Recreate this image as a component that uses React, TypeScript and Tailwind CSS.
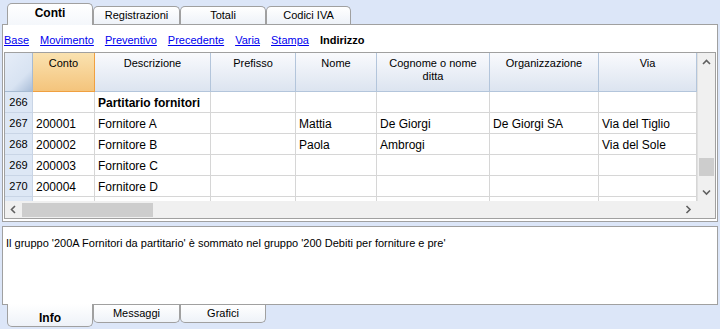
import React from "react";

type Col = { label: string[]; w: string };

const cols: Col[] = [
  { label: ["Descrizione"], w: "w-[116px]" },
  { label: ["Prefisso"], w: "w-[85px]" },
  { label: ["Nome"], w: "w-[81px]" },
  { label: ["Cognome o nome", "ditta"], w: "w-[113px]" },
  { label: ["Organizzazione"], w: "w-[109px]" },
  { label: ["Via"], w: "w-[98px]" },
];

const rows = [
  { n: "266", conto: "", cells: ["Partitario fornitori", "", "", "", "", ""], bold: true },
  { n: "267", conto: "200001", cells: ["Fornitore A", "", "Mattia", "De Giorgi", "De Giorgi SA", "Via del Tiglio"] },
  { n: "268", conto: "200002", cells: ["Fornitore B", "", "Paola", "Ambrogi", "", "Via del Sole"] },
  { n: "269", conto: "200003", cells: ["Fornitore C", "", "", "", "", ""] },
  { n: "270", conto: "200004", cells: ["Fornitore D", "", "", "", "", ""] },
  { n: "", conto: "", cells: ["", "", "", "", "", ""] },
];

const links = ["Base", "Movimento", "Preventivo", "Precedente", "Varia", "Stampa"];

function Chevron({ dir }: { dir: "up" | "down" | "left" | "right" }) {
  const pts = {
    up: "1,5 4.5,1.5 8,5",
    down: "1,1.5 4.5,5 8,1.5",
    left: "5,1 1.5,4.5 5,8",
    right: "1.5,1 5,4.5 1.5,8",
  }[dir];
  const size = dir === "up" || dir === "down" ? { w: 9, h: 7 } : { w: 7, h: 9 };
  return (
    <svg width={size.w} height={size.h} viewBox={`0 0 ${size.w} ${size.h}`}>
      <polyline points={pts} fill="none" stroke="#606060" strokeWidth="1.6" />
    </svg>
  );
}

function TopTab({ label, w, active }: { label: string; w: string; active?: boolean }) {
  if (active) {
    return (
      <div className={`${w} relative z-10 -mb-px flex h-[22px] items-center justify-center rounded-t-[5px] border border-b-0 border-[#a0a0a0] bg-[linear-gradient(#ffffff,#f4f7fb)] pb-[3px] text-[12px] font-bold text-black`}>
        {label}
      </div>
    );
  }
  return (
    <div className={`${w} flex h-[18px] items-center justify-center rounded-t-[5px] border border-b-0 border-[#a0a0a0] bg-[linear-gradient(#ffffff,#eef2f8)] text-[11px] text-black`}>
      {label}
    </div>
  );
}

function BottomTab({ label, w, active }: { label: string; w: string; active?: boolean }) {
  if (active) {
    return (
      <div className={`${w} relative z-10 -mt-px flex h-[23px] items-center justify-center rounded-b-[5px] border border-t-0 border-[#a0a0a0] bg-[linear-gradient(#ffffff,#eef2f8)] pt-[6px] text-[12px] font-bold text-black`}>
        {label}
      </div>
    );
  }
  return (
    <div className={`${w} flex h-[18px] items-center justify-center rounded-b-[5px] border border-t-0 border-[#a0a0a0] bg-[linear-gradient(#ffffff,#eef2f8)] text-[11px] text-black`}>
      {label}
    </div>
  );
}

export default function App() {
  return (
    <div className="h-[329px] w-[720px] overflow-hidden bg-[#dce6f8] font-['Liberation_Sans',Arial,sans-serif] text-black">
      <div className="flex h-[24px] items-end pl-[7px]">
        <TopTab label="Conti" w="w-[86px]" active />
        <TopTab label="Registrazioni" w="w-[87px]" />
        <TopTab label="Totali" w="w-[86px]" />
        <TopTab label="Codici IVA" w="w-[85px]" />
      </div>

      <div className="mx-[2px] h-[198px] border border-[#a0a0a0] bg-white">
        <div className="flex h-[27px] gap-[11px] pl-[1px] pt-[8px] text-[11px] leading-[14px]">
          {links.map((l) => (
            <span key={l} className="text-[#0000ee] underline">
              {l}
            </span>
          ))}
          <span className="font-bold">Indirizzo</span>
        </div>

        <div className="mx-[1px] h-[167px] border border-[#a0a0a0]">
          <div className="flex h-[148px]">
            <div className="w-[692px] overflow-hidden">
              <div className="flex h-[39px] text-[11px] leading-[13px]">
                <div className="w-[28px] shrink-0 border-b border-r border-[#a7bbd2] bg-[linear-gradient(135deg,#e6edf8_0%,#d8e3f2_65%,#a9bdd8_100%)]" />
                <div className="w-[62px] shrink-0 border-b border-r border-[#f0a040] bg-[linear-gradient(#fae2b0,#f4c47c)] pt-[4px] text-center">
                  Conto
                </div>
                {cols.map((c) => (
                  <div
                    key={c.label[0]}
                    className={`${c.w} shrink-0 border-b border-r border-[#b3c5db] bg-[linear-gradient(#f9fafd,#dce4f0)] pt-[4px] text-center`}
                  >
                    {c.label.map((t) => (
                      <div key={t}>{t}</div>
                    ))}
                  </div>
                ))}
              </div>
              {rows.map((r, i) => (
                <div key={i} className="flex h-[21px] text-[12px]">
                  <div className="flex w-[28px] shrink-0 items-center justify-center border-b border-r border-[#c9d5e6] bg-[#dde7f5] pt-px text-[11px]">
                    {r.n}
                  </div>
                  <div className="flex w-[62px] shrink-0 items-center border-b border-r border-[#d6d6d6] pl-[3px] pt-px">
                    {r.conto}
                  </div>
                  {r.cells.map((c, j) => (
                    <div
                      key={j}
                      className={`${cols[j].w} flex shrink-0 items-center border-b border-r border-[#d6d6d6] pl-[3px] pt-px ${
                        r.bold ? "font-bold" : ""
                      }`}
                    >
                      {c}
                    </div>
                  ))}
                </div>
              ))}
            </div>
            <div className="relative w-[18px] border-l border-[#e0e0e0] bg-[#f0f0f0]">
              <div className="absolute left-[4px] top-[6px]">
                <Chevron dir="up" />
              </div>
              <div className="absolute left-[1px] top-[105px] h-[18px] w-[15px] bg-[#cdcdcd]" />
              <div className="absolute left-[4px] top-[136px]">
                <Chevron dir="down" />
              </div>
            </div>
          </div>
          <div className="flex h-[17px] items-center bg-[#f0f0f0]">
            <div className="flex w-[16px] justify-center">
              <Chevron dir="left" />
            </div>
            <div className="ml-[1px] h-[14px] w-[131px] bg-[#cdcdcd]" />
            <div className="flex-1" />
            <div className="mr-[22px] flex w-[10px] justify-center">
              <Chevron dir="right" />
            </div>
          </div>
        </div>
      </div>

      <div className="mx-[2px] mt-[4px] h-[79px] border border-[#a0a0a0] bg-white px-[3px] pt-[9px] text-[11px] leading-[14px]">
        Il gruppo '200A Fornitori da partitario' è sommato nel gruppo '200 Debiti per forniture e pre'
      </div>

      <div className="flex items-start pl-[7px]">
        <BottomTab label="Info" w="w-[86px]" active />
        <BottomTab label="Messaggi" w="w-[87px]" />
        <BottomTab label="Grafici" w="w-[86px]" />
      </div>
    </div>
  );
}
